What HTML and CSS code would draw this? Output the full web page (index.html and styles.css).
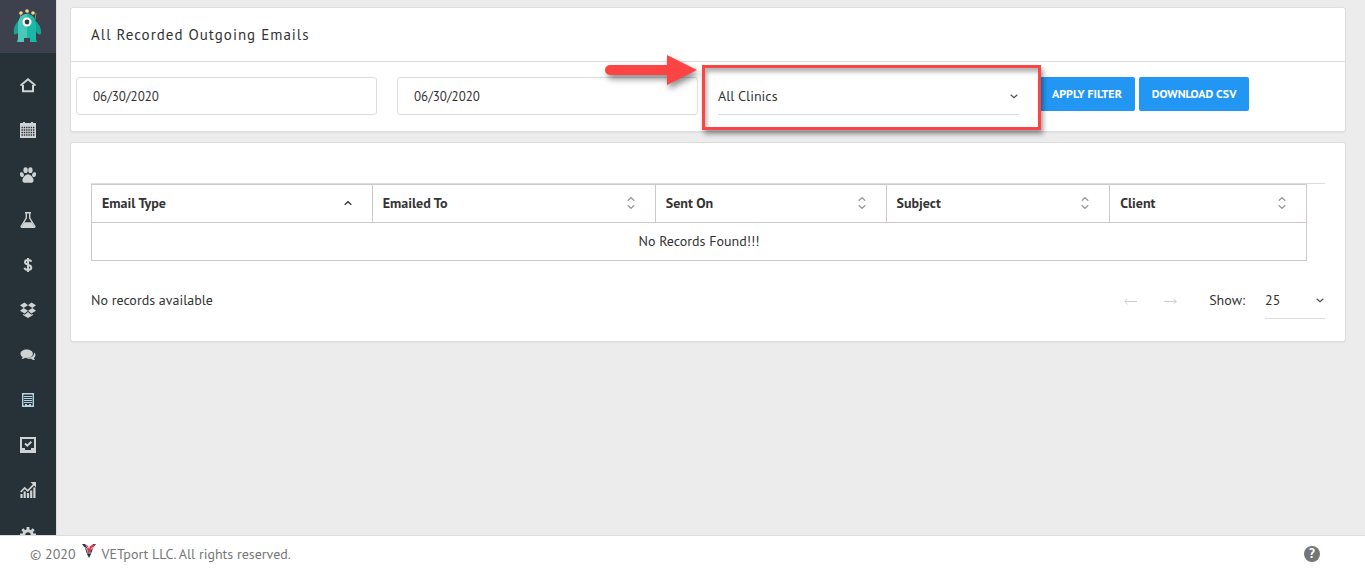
FILE: index.html
```html
<!DOCTYPE html>
<html lang="en">
<head>
  <meta charset="UTF-8">
  <meta name="viewport" content="width=device-width, initial-scale=1.0">
  <title>All Recorded Outgoing Emails</title>
  <link rel="stylesheet" href="styles.css">
</head>
<body>
<div class="page">
  <aside class="sidebar">
    <a class="brand" href="#" aria-label="VETport">
      <svg width="30" height="36" viewBox="0 0 30 36">
        <path d="M8 12 7 5M15 9V3M22 12 23 5" stroke="#8b8d6c" stroke-width="1"/>
        <g fill="#f4dc85"><circle cx="8" cy="5" r="1.8"/><circle cx="14" cy="3" r="1.8"/><circle cx="20" cy="5" r="1.8"/></g>
        <path d="M7 12C2 15 0 21 1 26c2 1 4 0 5-3zM21 12c5 3 8 9 7 14-2 1-4 0-5-3z" fill="#16a394"/>
        <path d="M14 6C8 6 5 11 5 17v11c0 3 0 4-1 6h7v-4h6v4h7c-1-2-1-3-1-6V17c0-6-3-11-9-11z" fill="#1cb8a6"/>
        <path d="M14 6C8 6 5 11 5 17v11c0 3 0 4-1 6h7v-4h3z" fill="#4bc8bb"/>
        <circle cx="14" cy="14" r="4.5" fill="#fff"/><circle cx="14" cy="14" r="2.4" fill="#34373d"/>
      </svg>
    </a>
    <nav class="menu">
      <a href="#" aria-label="Home"><svg viewBox="0 0 16 16"><path d="M.5 8.600 8 2.200l7.500 6.400M3 8v6.200h10V8" fill="none" stroke="currentColor" stroke-width="2"/></svg></a>
      <a href="#" aria-label="Calendar"><svg viewBox="0 0 16 16"><path d="M0 1h3V0h2v1h6V0h2v1h3v15H0z" fill="currentColor"/><path d="M1.500 5.500h13M1.500 8h13M1.500 10.500h13M1.500 13h13" stroke="#263238" stroke-width="1.400" stroke-dasharray="1.400 .9"/></svg></a>
      <a href="#" aria-label="Patients"><svg viewBox="0 0 16 16" fill="currentColor"><ellipse cx="5.600" cy="3.200" rx="2.200" ry="2.900"/><ellipse cx="10.400" cy="3.200" rx="2.200" ry="2.900"/><ellipse cx="1.900" cy="7.600" rx="1.900" ry="2.500" transform="rotate(-20 2 7.600)"/><ellipse cx="14.100" cy="7.600" rx="1.900" ry="2.500" transform="rotate(20 14 7.600)"/><path d="M8 7.200c2.300 0 5.600 3.600 5.600 6.100 0 3.300-3.200 2.400-5.600 2.400s-5.600.9-5.600-2.400C2.400 10.800 5.700 7.200 8 7.200z"/></svg></a>
      <a href="#" aria-label="Lab"><svg viewBox="0 0 16 16"><path d="M5 .7h6M6.300 1v5L1.200 14.200q-.4 1 .6 1h12.400q1 0 .6-1L9.700 6V1" fill="none" stroke="currentColor" stroke-width="1.400"/><path d="M4.300 10.300h7.400l3 4.900H1.300z" fill="currentColor"/></svg></a>
      <a href="#" aria-label="Billing"><svg viewBox="0 0 16 16"><path d="M8 1v14M11.200 4.800C10.500 2.500 5 2.400 5 5.200 5 8.300 11.300 7.200 11.300 10.600c0 3.200-6.100 3-6.800.2" fill="none" stroke="currentColor" stroke-width="2"/></svg></a>
      <a href="#" aria-label="Inventory"><svg viewBox="0 0 16 16" fill="currentColor"><path d="M4.500.5 8 3.300 3.600 6 0 3.300zM11.500.5 16 3.300 12.400 6 8 3.300zM0 8.800 3.600 6 8 8.800l-3.400 2.800zM16 8.800 12.400 6 8 8.800l3.400 2.800zM3.200 11.700l1.400 1L8 10l3.400 2.700 1.400-1v1.500L8 16l-4.800-2.800z"/></svg></a>
      <a href="#" aria-label="Messages"><svg viewBox="0 0 16 16" fill="currentColor"><path d="M14 5.500c1.200.9 1.600 2.200 1.400 3.300-.2 1-.8 1.700-1.500 2.200.1 1 .6 1.500 1.200 2-1.700.1-3-.5-3.900-1.300-1.700.3-3.500 0-4.700-.8C11 11.200 14.500 9 14 5.500z"/><path d="M6.700 2.500c3.500 0 6.200 1.800 6.200 4.200s-2.700 4.200-6.200 4.200l-1.500-.1c-1 .8-2.200 1.200-3.700 1.200.7-.6 1.100-1.200 1.200-2C1.300 9.200.5 8 .5 6.700c0-2.400 2.700-4.200 6.200-4.200z"/></svg></a>
      <a class="active" href="#" aria-label="Clinic"><svg viewBox="0 0 16 16"><path d="M2.700 1.700h10.600v12.600H2.700z" fill="none" stroke="currentColor" stroke-width="1.400"/><path d="M4 4.500h8M4 6.500h8M4 8.500h8M4 10.500h8" stroke="currentColor"/><path d="M5 12h2v1h2v-1h2v3H5z" fill="currentColor"/></svg></a>
      <a href="#" aria-label="Tasks"><svg viewBox="0 0 16 16"><path d="M1 1h14v14H1z" fill="none" stroke="currentColor" stroke-width="2"/><path d="M2 11h3v2h6v-2h3v4H2z" fill="currentColor"/><path d="m5 6.500 2.300 2.200L11.300 4.800" fill="none" stroke="currentColor" stroke-width="2"/></svg></a>
      <a href="#" aria-label="Reports"><svg viewBox="0 0 16 16"><path d="M1.500 12v4M4.700 9.500V16M8 11v5M11.200 8.500V16M14.400 5.500V16" stroke="currentColor" stroke-width="2.200"/><path d="m.7 10 4-4 3 2.800 6.500-6.600" fill="none" stroke="currentColor" stroke-width="1.700"/><path d="M10.500 0H16v5.500z" fill="currentColor"/></svg></a>
      <a href="#" aria-label="Settings"><svg viewBox="0 0 16 16"><circle cx="8" cy="8" r="4.200" fill="none" stroke="currentColor" stroke-width="3"/><path d="M8 0v3M8 13v3M0 8h3M13 8h3M2.300 2.300l2.200 2.200M11.500 11.500l2.200 2.200M2.300 13.700l2.200-2.200M11.500 4.500l2.200-2.200" stroke="currentColor" stroke-width="2.800"/></svg></a>
    </nav>
  </aside>

  <main class="content">
    <section class="panel">
      <h1 class="panel-title">All Recorded Outgoing Emails</h1>
      <form class="filters">
        <input class="date" type="text" value="06/30/2020" aria-label="From date">
        <input class="date" type="text" value="06/30/2020" aria-label="To date">
        <div class="clinic">
          <select aria-label="Clinic">
            <option>All Clinics</option>
          </select>
          <svg class="caret" viewBox="0 0 8 5"><path d="m.7.7 3.300 3 3.300-3"/></svg>
          <div class="highlight"></div>
          <svg class="pointer" width="92" height="32" viewBox="0 0 92 32"><path d="M5 10h57V0l30 15-30 15V20H5a5 5 0 0 1 0-10z" fill="#fc4444"/></svg>
        </div>
        <div class="actions">
          <button type="button">Apply Filter</button>
          <button type="button">Download CSV</button>
        </div>
      </form>
    </section>

    <section class="panel records">
      <div class="table-wrap">
        <table>
          <thead>
            <tr>
              <th class="col-type"><div class="head">Email Type<svg class="asc" viewBox="0 0 8 14"><path d="m.7 8.700 3.300-3 3.300 3"/></svg></div></th>
              <th class="col-to"><div class="head">Emailed To<svg viewBox="0 0 8 14"><path d="M.7 4.700 4 1.700l3.300 3M.7 9.300l3.300 3 3.300-3"/></svg></div></th>
              <th class="col-sent"><div class="head">Sent On<svg viewBox="0 0 8 14"><path d="M.7 4.700 4 1.700l3.300 3M.7 9.300l3.300 3 3.300-3"/></svg></div></th>
              <th class="col-subject"><div class="head">Subject<svg viewBox="0 0 8 14"><path d="M.7 4.700 4 1.700l3.300 3M.7 9.300l3.300 3 3.300-3"/></svg></div></th>
              <th><div class="head">Client<svg viewBox="0 0 8 14"><path d="M.7 4.700 4 1.700l3.300 3M.7 9.300l3.300 3 3.300-3"/></svg></div></th>
            </tr>
          </thead>
          <tbody>
            <tr><td colspan="5">No Records Found!!!</td></tr>
          </tbody>
        </table>
      </div>
      <div class="pager">
        <span class="summary">No records available</span>
        <button type="button" aria-label="Previous page" disabled><svg viewBox="0 0 13 7"><path d="M.8 3.500H13M3.500.8.800 3.500l2.700 2.700"/></svg></button>
        <button type="button" aria-label="Next page" disabled><svg viewBox="0 0 13 7"><path d="M0 3.500h12.200M9.500.8l2.700 2.700-2.700 2.700"/></svg></button>
        <label for="pageSize">Show:</label>
        <div class="page-size">
          <select id="pageSize">
            <option>25</option>
          </select>
          <svg class="caret" viewBox="0 0 8 5"><path d="m.7.7 3.300 3 3.300-3"/></svg>
        </div>
      </div>
    </section>
  </main>
</div>

<footer class="footer">
  <span>© 2020</span>
  <svg class="mark" width="14" height="14" viewBox="0 0 14 14"><path d="M0 0h3l4 7 4-7h3l-3 4-2 6-2 4-2-4-2-6z" fill="#2b2f4b"/><path d="m3 0 3 2 1 3 1-3 5-2-5 9-3-3 1-2z" fill="#e8364a"/><path d="m1 3 3 1 2 4M9 5l3-2M5 9l4 0" stroke="#fff" stroke-width=".7" fill="none"/></svg>
  <span>VETport LLC. All rights reserved.</span>
  <a class="help" href="#" aria-label="Help">?</a>
</footer>
</body>
</html>
```
FILE: styles.css
```css
* {
  box-sizing: border-box;
}
body {
  margin: 0;
  height: 100vh;
  display: flex;
  flex-direction: column;
  font-family: "PT Sans", Lato, sans-serif;
  font-size: 14px;
  line-height: 20px;
  color: #333;
  background: #ececec;
}
.page {
  flex: 1;
  min-height: 0;
  display: flex;
}

/* sidebar */
.sidebar {
  flex: none;
  width: 56px;
  overflow: hidden;
  background: #263238;
}
.brand {
  display: flex;
  justify-content: center;
  align-items: center;
  height: 53px;
  padding-bottom: 2px;
  background: #3d414d;
}
.menu {
  padding-top: 9px;
}
.menu a {
  display: flex;
  align-items: center;
  justify-content: center;
  height: 45px;
  color: #d0d3d4;
}
.menu .active {
  color: #b5d5e4;
}
.menu svg {
  width: 16px;
  height: 16px;
}

/* panels */
.content {
  flex: 1;
  padding: 7px 19px 0 13px;
  border-left: 1px solid #ddd;
  overflow: hidden;
}
.panel {
  margin-bottom: 10px;
  background: #fff;
  border: 1px solid #ddd;
  border-radius: 3px;
  box-shadow: 0 1px 1px rgba(0,0,0,0.05);
}
.panel-title {
  margin: 0;
  padding: 17px 20px 16px;
  border-bottom: 1px solid #ddd;
  font-size: 15px;
  line-height: 20px;
  font-weight: normal;
  letter-spacing: 1px;
}
.filters {
  display: grid;
  grid-template-columns: repeat(4, 1fr);
  gap: 20px;
  padding: 15px 5px 16px;
}
input,
select,
button {
  font: inherit;
  color: inherit;
}
.date {
  width: 100%;
  height: 38px;
  padding: 0 16px;
  border: 1px solid #ddd;
  border-radius: 3px;
  font-size: 13px;
}
select {
  width: 100%;
  height: 38px;
  padding: 0;
  border: none;
  border-bottom: 1px solid #ddd;
  background: none;
  appearance: none;
}
.clinic,
.page-size {
  position: relative;
}
.caret {
  position: absolute;
  right: 1px;
  top: 17px;
  width: 8px;
  height: 5px;
  fill: none;
  stroke: #555;
  stroke-width: 1.3;
  pointer-events: none;
}
.highlight {
  position: absolute;
  inset: -12px -22px -15px -16px;
  border: 3px solid #fc4444;
  box-shadow: 2px 4px 5px rgba(0,0,0,0.4), inset 2px 4px 4px rgba(0,0,0,0.3);
  pointer-events: none;
}
.pointer {
  position: absolute;
  left: -113px;
  top: -22px;
  overflow: visible;
  filter: drop-shadow(2px 4px 3px rgba(0,0,0,0.45));
  pointer-events: none;
}
.actions {
  display: flex;
  align-items: flex-start;
  gap: 4px;
}
.actions button {
  height: 34px;
  padding: 0 13px;
  border: none;
  border-radius: 2px;
  background: #2196f3;
  color: #fff;
  font-size: 12px;
  font-weight: bold;
  text-transform: uppercase;
  white-space: nowrap;
  cursor: pointer;
}

/* records table */
.records {
  padding: 40px 20px 22px;
}
.table-wrap {
  padding-right: 18px;
  border-top: 1px solid #ddd;
}
table {
  width: 100%;
  table-layout: fixed;
  border-collapse: collapse;
}
th,
td {
  height: 38px;
  padding: 0 10px 2px;
  border: 1px solid #cfc9cb;
}
th {
  text-align: left;
}
td {
  text-align: center;
}
.col-type {
  width: 23.1%;
}
.col-to {
  width: 23.3%;
}
.col-sent {
  width: 19%;
}
.col-subject {
  width: 18.4%;
}
.head {
  display: flex;
  justify-content: space-between;
  align-items: center;
  padding-right: 10px;
}
.head svg {
  width: 8px;
  height: 14px;
  fill: none;
  stroke: #999;
  stroke-width: 1.3;
}
.head .asc {
  stroke: #333;
}
.pager {
  display: flex;
  align-items: center;
  padding-top: 20px;
}
.summary {
  flex: 1;
}
.pager button {
  width: 40px;
  height: 38px;
  padding: 0;
  border: none;
  background: none;
}
.pager button svg {
  width: 13px;
  height: 7px;
  fill: none;
  stroke: #ccc;
}
.pager label {
  margin: 0 20px 0 19px;
}
.page-size {
  width: 60px;
}

/* footer */
.footer {
  display: flex;
  align-items: center;
  gap: 6px;
  height: 34px;
  padding: 3px 45px 0 30px;
  border-top: 1px solid #ddd;
  background: #fff;
  color: #777;
}
.mark {
  margin-bottom: 6px;
}
.help {
  width: 16px;
  height: 16px;
  margin-left: auto;
  border-radius: 50%;
  background: #757575;
  color: #fff;
  font-size: 13px;
  font-weight: 900;
  line-height: 16px;
  text-align: center;
  text-decoration: none;
}
```
